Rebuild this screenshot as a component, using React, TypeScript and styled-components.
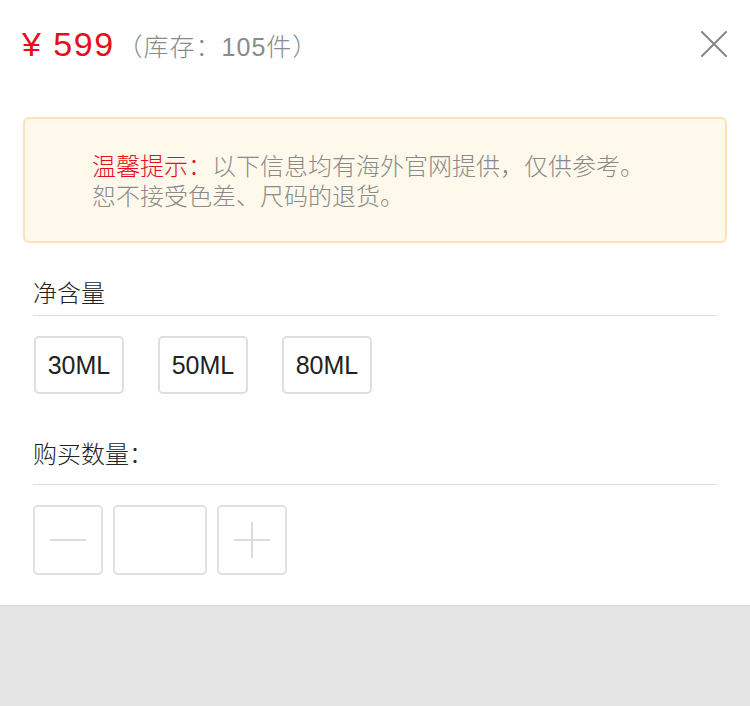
import React from "react";
import styled, { createGlobalStyle } from "styled-components";

const GlobalStyle = createGlobalStyle`
  html, body { margin: 0; padding: 0; background: #ffffff; }
  body {
    font-family: "Liberation Sans", "Noto Sans CJK SC", Arial, sans-serif;
    font-weight: 300;
    -webkit-font-smoothing: antialiased;
  }
  * { box-sizing: border-box; }
`;

const Page = styled.div`
  width: 750px;
  height: 706px;
  display: flex;
  flex-direction: column;
  background: #ffffff;
  overflow: hidden;
`;

const Header = styled.div`
  display: flex;
  justify-content: space-between;
  align-items: flex-start;
  padding: 24px 23px 0 23px;
  height: 64px;
`;

const PriceGroup = styled.div`
  display: flex;
  align-items: baseline;
`;

const Price = styled.span`
  color: #e60e1e;
  font-size: 34px;
  line-height: 40px;
  letter-spacing: 1.5px;
  white-space: pre;
  margin-left: -1px;
`;

const Stock = styled.span`
  color: #8a8a8a;
  font-size: 25px;
  line-height: 40px;
  letter-spacing: 1px;
  margin-left: 3px;
`;

const CloseButton = styled.button`
  width: 26px;
  height: 26px;
  margin-top: 7px;
  padding: 0;
  border: none;
  background: transparent;
  display: block;
  cursor: pointer;
`;

const Notice = styled.div`
  margin: 53px 23px 0 23px;
  padding: 33px 20px 29px 67px;
  background: #fff9ec;
  border: 2px solid #fbe2bc;
  border-radius: 6px;
  font-size: 24px;
  line-height: 30px;
  color: #8a8a8a;
`;

const NoticeLabel = styled.span`
  color: #e60e1e;
`;

const Section = styled.div<{ $top: number }>`
  margin: ${(p) => p.$top}px 33px 0 33px;
`;

const SectionTitle = styled.div<{ $pad: number }>`
  font-size: 24px;
  line-height: 30px;
  color: #222222;
  padding-bottom: ${(p) => p.$pad}px;
  border-bottom: 1px solid #dcdcdc;
`;

const OptionRow = styled.div`
  display: flex;
  gap: 34px;
  padding: 20px 0 0 1px;
`;

const OptionButton = styled.button`
  width: 90px;
  height: 58px;
  border: 2px solid #dedede;
  border-radius: 5px;
  background: #ffffff;
  font-family: "Liberation Sans", "Noto Sans CJK SC", Arial, sans-serif;
  font-size: 25px;
  font-weight: 300;
  color: #222222;
  padding: 0;
  display: flex;
  align-items: center;
  justify-content: center;
`;

const QtyRow = styled.div`
  display: flex;
  gap: 10px;
  padding-top: 20px;
`;

const QtyButton = styled.button`
  width: 70px;
  height: 70px;
  border: 2px solid #e0e0e0;
  border-radius: 5px;
  background: #ffffff;
  padding: 0;
  display: flex;
  align-items: center;
  justify-content: center;
`;

const QtyInput = styled.input`
  width: 94px;
  height: 70px;
  border: 2px solid #e0e0e0;
  border-radius: 5px;
  background: #ffffff;
  outline: none;
  text-align: center;
  font-size: 24px;
  padding: 0;
`;

const Footer = styled.div`
  margin-top: 30px;
  flex: 1;
  background: #e4e4e4;
  border-top: 1px solid #d9d9d9;
`;

const CloseIcon = () => (
  <svg width="26" height="26" viewBox="0 0 26 26">
    <path d="M1 1 L25 25 M25 1 L1 25" stroke="#868686" strokeWidth="2" strokeLinecap="round" />
  </svg>
);

const MinusIcon = () => (
  <svg width="38" height="38" viewBox="0 0 38 38">
    <path d="M1 19 H37" stroke="#dcdcdc" strokeWidth="2" />
  </svg>
);

const PlusIcon = () => (
  <svg width="38" height="38" viewBox="0 0 38 38">
    <path d="M1 19 H37 M19 1 V37" stroke="#dcdcdc" strokeWidth="2" />
  </svg>
);

export default function App() {
  const options = ["30ML", "50ML", "80ML"];
  return (
    <>
      <GlobalStyle />
      <Page>
        <Header>
          <PriceGroup>
            <Price>¥ 599</Price>
            <Stock>（库存：105件）</Stock>
          </PriceGroup>
          <CloseButton aria-label="关闭">
            <CloseIcon />
          </CloseButton>
        </Header>
        <Notice>
          <NoticeLabel>温馨提示：</NoticeLabel>以下信息均有海外官网提供，仅供参考。
          <br />
          恕不接受色差、尺码的退货。
        </Notice>
        <Section $top={36}>
          <SectionTitle $pad={6}>净含量</SectionTitle>
          <OptionRow>
            {options.map((o) => (
              <OptionButton key={o}>{o}</OptionButton>
            ))}
          </OptionRow>
        </Section>
        <Section $top={46}>
          <SectionTitle $pad={14}>购买数量：</SectionTitle>
          <QtyRow>
            <QtyButton aria-label="减少">
              <MinusIcon />
            </QtyButton>
            <QtyInput defaultValue="" />
            <QtyButton aria-label="增加">
              <PlusIcon />
            </QtyButton>
          </QtyRow>
        </Section>
        <Footer />
      </Page>
    </>
  );
}
